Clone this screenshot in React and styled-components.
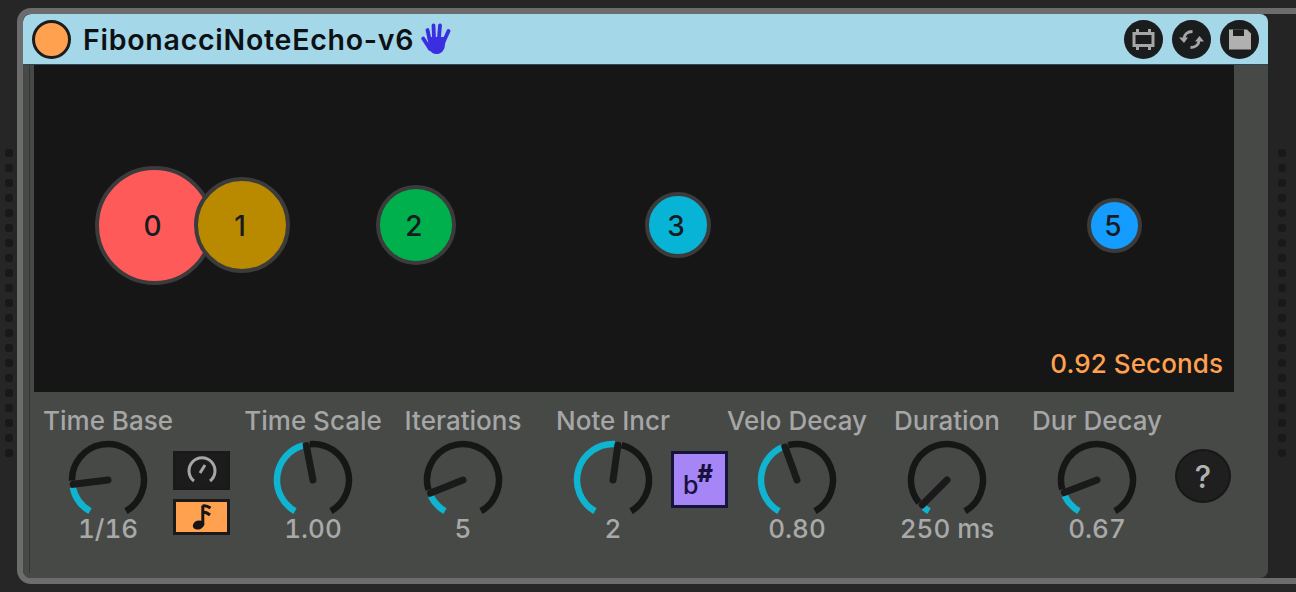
import React from "react";
import styled, { createGlobalStyle } from "styled-components";

const Global = createGlobalStyle`
  html, body { margin: 0; padding: 0; background: #252525; overflow: hidden; }
  body { font-family: Inter, "Liberation Sans", sans-serif; }
`;

const Page = styled.div`
  display: flex;
  width: 1296px;
  height: 592px;
  background: #262626;
`;
const DotRail = styled.div`
  display: flex;
  flex-direction: column;
  gap: 7px;
  flex: 0 0 ${(p) => p.$width}px;
  box-sizing: border-box;
  padding-top: ${(p) => p.$top}px;
  padding-left: ${(p) => p.$left}px;
`;
const Dot = styled.span`
  display: block;
  width: 8px;
  height: 8px;
  border-radius: 3px;
  background: #191919;
`;
const Device = styled.div`
  flex: 1;
  min-width: 0;
  display: flex;
  box-sizing: border-box;
  margin-top: 8px;
  height: 576px;
  border: 6px solid #6c6c6c;
  border-right: 0;
  border-radius: 14px 0 0 14px;
  background: #242424;
  overflow: hidden;
`;
const Main = styled.div`
  flex: 0 0 1245px;
  min-width: 0;
  display: flex;
  flex-direction: column;
  background: #474947;
  border-radius: 0 8px 8px 0;
`;
const TitleBar = styled.header`
  flex: 0 0 51px;
  box-sizing: border-box;
  display: flex;
  align-items: center;
  padding: 0 9px;
  background: #a4d7e8;
  border-radius: 8px 8px 0 0;
  border-bottom: 1px solid #2b4a55;
`;
const Power = styled.span`
  width: 39px;
  height: 39px;
  box-sizing: border-box;
  border-radius: 50%;
  background: #ffa14f;
  border: 3px solid #1c1c1c;
`;
const Title = styled.h1`
  margin: 0 0 0 12px;
  font-size: 28.5px;
  font-weight: 600;
  color: #0e1114;
  letter-spacing: 0.75px;
  white-space: nowrap;
`;
const HandIcon = styled.svg`
  margin-left: 7px;
  width: 30px;
  height: 33px;
`;
const Actions = styled.div`
  margin-left: auto;
  display: flex;
  gap: 9px;
`;
const RoundAction = styled.span`
  width: 39px;
  height: 39px;
  border-radius: 50%;
  background: #1a1c1d;
  display: flex;
  align-items: center;
  justify-content: center;
`;
const Content = styled.div`
  flex: 1;
  min-width: 0;
  margin: 0 0 5px 6px;
  padding-left: 4px;
  border-left: 1px solid #353635;
  display: flex;
  flex-direction: column;
`;
const Display = styled.div`
  position: relative;
  flex: 0 0 327px;
  width: 1200px;
  background: #161616;
`;
const Node = styled.div`
  position: absolute;
  box-sizing: border-box;
  left: ${(p) => p.$cx - 34 - p.$d / 2}px;
  top: ${(p) => 160 - p.$d / 2}px;
  width: ${(p) => p.$d}px;
  height: ${(p) => p.$d}px;
  border-radius: 50%;
  border: 4px solid #3b3b3b;
  background: ${(p) => p.$color};
  display: flex;
  align-items: center;
  justify-content: center;
  padding: 1px 3px 0 0;
  font-size: 28px;
  font-weight: 500;
  color: #161c1f;
`;
const Seconds = styled.div`
  position: absolute;
  right: 11px;
  bottom: 13px;
  font-size: 26px;
  font-weight: 500;
  letter-spacing: 0.1px;
  color: #ffa14f;
  white-space: nowrap;
`;
const Controls = styled.div`
  display: flex;
  align-items: flex-start;
  padding-top: 14px;
`;
const Control = styled.div`
  flex: 0 0 80px;
  min-width: 0;
  margin-left: ${(p) => p.$gap}px;
  display: flex;
  flex-direction: column;
  align-items: center;
`;
const Label = styled.div`
  font-size: 26px;
  font-weight: 500;
  line-height: 30px;
  color: #a6a6a6;
  white-space: nowrap;
`;
const KnobSvg = styled.svg`
  display: block;
  flex: none;
  width: 80px;
  height: 80px;
  margin-top: 4px;
`;
const Value = styled.div`
  margin-top: -6px;
  font-size: 26px;
  font-weight: 500;
  font-variant-numeric: tabular-nums;
  line-height: 30px;
  color: #a9a9a9;
  white-space: nowrap;
`;
const Stack = styled.div`
  flex: 0 0 57px;
  margin: 45px 0 0 ${(p) => p.$gap}px;
  display: flex;
  flex-direction: column;
  gap: 9px;
`;
const ModeButton = styled.span`
  box-sizing: border-box;
  height: ${(p) => p.$h}px;
  border: 3px solid #1a1a1a;
  background: ${(p) => p.$bg};
  display: flex;
  align-items: center;
  justify-content: center;
`;
const ScaleButton = styled.span`
  flex: 0 0 57px;
  height: 57px;
  box-sizing: border-box;
  margin: 45px 0 0 ${(p) => p.$gap}px;
  border: 3px solid #16143a;
  background: #a685f7;
  display: flex;
  align-items: center;
  justify-content: center;
  padding-right: 3px;
  color: #17123c;
`;
const Flat = styled.span`
  font-size: 25px;
  font-weight: 500;
  line-height: 30px;
  margin-top: 10px;
`;
const Sharp = styled.span`
  font-size: 24px;
  font-weight: 800;
  line-height: 24px;
  margin: -12px 0 0 -1px;
`;
const Help = styled.span`
  flex: 0 0 56px;
  height: 54px;
  box-sizing: border-box;
  margin: 43px 0 0 ${(p) => p.$gap}px;
  border-radius: 50%;
  background: #1f1f1f;
  border: 2px solid #171717;
  display: flex;
  align-items: center;
  justify-content: center;
  font-size: 31px;
  font-weight: 500;
  color: #b2b2b2;
`;

const pt = (a, r = 36, c = 40) => {
  const t = (a * Math.PI) / 180;
  return [c + r * Math.sin(t), c - r * Math.cos(t)];
};
const arc = (from, to) => {
  const [x1, y1] = pt(from);
  const [x2, y2] = pt(to);
  return `M${x1.toFixed(2)} ${y1.toFixed(2)}A36 36 0 ${to - from > 180 ? 1 : 0} 1 ${x2.toFixed(2)} ${y2.toFixed(2)}`;
};

function Knob({ angle }) {
  const [tx, ty] = pt(angle, 35);
  return (
    <KnobSvg viewBox="0 0 80 80">
      <path d={arc(angle + 6, 150)} fill="none" stroke="#161616" strokeWidth="6.5" />
      <path d={arc(-150, angle - 5)} fill="none" stroke="#0fb4d0" strokeWidth="6.5" />
      <line x1="40" y1="40" x2={tx} y2={ty} stroke="#1a1a1a" strokeWidth="7" strokeLinecap="round" />
    </KnobSvg>
  );
}

function Ctrl({ label, value, angle, gap }) {
  return (
    <Control $gap={gap}>
      <Label>{label}</Label>
      <Knob angle={angle} />
      <Value>{value}</Value>
    </Control>
  );
}

const dots = Array.from({ length: 21 }, (_, i) => i);

export default function App() {
  return (
    <Page>
      <Global />
      <DotRail $width={17} $top={149} $left={5}>
        {dots.map((i) => <Dot key={i} />)}
      </DotRail>
      <Device>
        <Main>
          <TitleBar>
            <Power />
            <Title>FibonacciNoteEcho-v6</Title>
            <HandIcon viewBox="0 0 30 33">
              <g stroke="#3a2de2" strokeWidth="3.8" strokeLinecap="round" fill="none">
                <line x1="8.5" y1="16" x2="6.5" y2="7" />
                <line x1="13" y1="15" x2="12.5" y2="2.5" />
                <line x1="18" y1="15" x2="19" y2="2.5" />
                <line x1="23" y1="18" x2="27.5" y2="8" />
                <line x1="9" y1="26" x2="2.2" y2="15.5" />
              </g>
              <path d="M6.5 14H25L23.5 25Q21 31 15.5 31Q10.5 31 8 26Z" fill="#3a2de2" />
            </HandIcon>
            <Actions>
              <RoundAction>
                <svg width="25" height="25" viewBox="0 0 25 25" fill="none" stroke="#a6a6a6" strokeWidth="3">
                  <rect x="3" y="6.5" width="19" height="12" />
                  <path d="M6.5 6V2M18.5 6V2M6.5 19V23M18.5 19V23" />
                </svg>
              </RoundAction>
              <RoundAction>
                <svg width="29" height="29" viewBox="0 0 29 29" fill="none">
                  <path d="M7 14C7 9.5 10.5 6.5 15.5 6.5" stroke="#a6a6a6" strokeWidth="3" />
                  <path d="M22 15C22 19.5 18.5 22.5 13.5 22.5" stroke="#a6a6a6" strokeWidth="3" />
                  <path d="M2 12.5H11L7 18ZM18 16.5H27L22.5 11Z" fill="#a6a6a6" />
                </svg>
              </RoundAction>
              <RoundAction>
                <svg width="24" height="23" viewBox="0 0 24 23">
                  <path d="M1 1.5H19L23 5.5V21.5H1Z" fill="#b0b0b0" />
                  <rect x="5" y="1.5" width="11" height="6.5" fill="#1a1c1d" />
                </svg>
              </RoundAction>
            </Actions>
          </TitleBar>
          <Content>
            <Display>
              <Node $cx={154} $d={119} $color="#ff5a5a">0</Node>
              <Node $cx={241.5} $d={96} $color="#b98a00">1</Node>
              <Node $cx={415.5} $d={80} $color="#00b04c">2</Node>
              <Node $cx={677.5} $d={66} $color="#08b4d6">3</Node>
              <Node $cx={1114.5} $d={55} $color="#149dff">5</Node>
              <Seconds>0.92 Seconds</Seconds>
            </Display>
            <Controls>
              <Ctrl label="Time Base" value="1/16" angle={-97} gap={34} />
              <Stack $gap={25}>
                <ModeButton $h={39} $bg="#1c1c1c">
                  <svg width="32" height="32" viewBox="0 0 32 32" fill="none" stroke="#a6a6a6" strokeWidth="3">
                    <path d="M8 26A13 13 0 1 1 24 26" />
                    <line x1="14" y1="18" x2="19" y2="10" />
                  </svg>
                </ModeButton>
                <ModeButton $h={36} $bg="#ffa14f">
                  <svg width="24" height="28" viewBox="0 0 24 28">
                    <ellipse cx="8.5" cy="22" rx="5.8" ry="4.4" fill="#151515" transform="rotate(-20 8.5 22)" />
                    <path d="M12.8 22V2.5" fill="none" stroke="#151515" strokeWidth="3" />
                    <path d="M12.8 3Q16 2 20.5 5M12.8 9Q16.5 9 20 12" fill="none" stroke="#151515" strokeWidth="3" />
                  </svg>
                </ModeButton>
              </Stack>
              <Ctrl label="Time Scale" value="1.00" angle={-11} gap={43} />
              <Ctrl label="Iterations" value="5" angle={-112} gap={70} />
              <Ctrl label="Note Incr" value="2" angle={8} gap={70} />
              <ScaleButton $gap={18}>
                <Flat>b</Flat>
                <Sharp>#</Sharp>
              </ScaleButton>
              <Ctrl label="Velo Decay" value="0.80" angle={-20} gap={29} />
              <Ctrl label="Duration" value="250 ms" angle={-135} gap={70} />
              <Ctrl label="Dur Decay" value="0.67" angle={-111} gap={70} />
              <Help $gap={38}>?</Help>
            </Controls>
          </Content>
        </Main>
        <DotRail $width={28} $top={135} $left={10}>
          {dots.map((i) => <Dot key={i} />)}
        </DotRail>
      </Device>
    </Page>
  );
}
